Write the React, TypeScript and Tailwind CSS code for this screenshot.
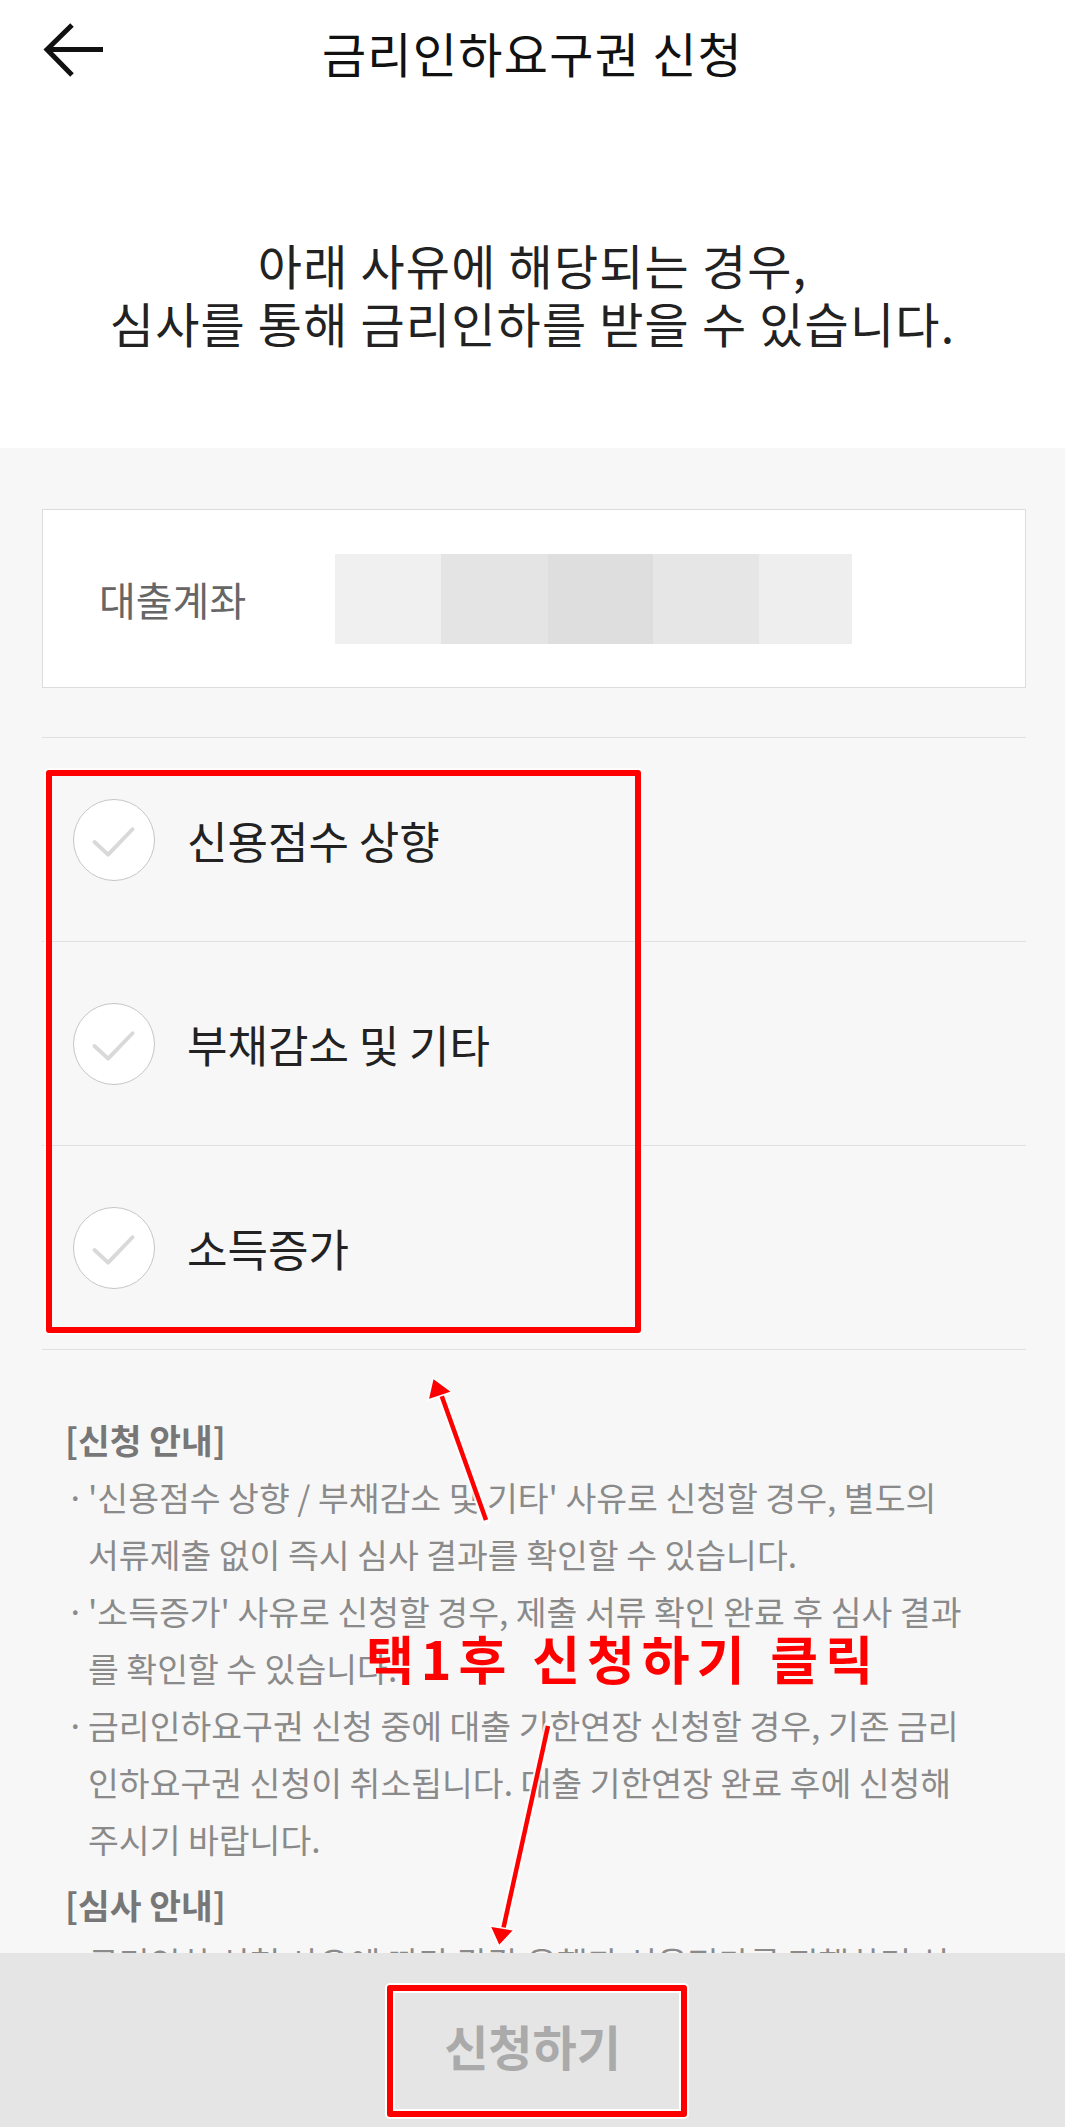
import React from 'react';

const reasons = ['신용점수 상향', '부채감소 및 기타', '소득증가'];

const blurCells = [
    { c: 'bg-[#f0f0f0]', w: 'w-[106px]' },
    { c: 'bg-[#e4e4e4]', w: 'w-[107px]' },
    { c: 'bg-[#dedede]', w: 'w-[105px]' },
    { c: 'bg-[#e6e6e6]', w: 'w-[106px]' },
    { c: 'bg-[#eeeeee]', w: 'w-[93px]' },
];

function BackArrow() {
    return (
        <svg width="64" height="56" viewBox="0 0 64 56" fill="none">
            <path d="M29 3 L4 27.5 L29 53" stroke="#111" strokeWidth="5" />
            <path d="M5 27.5 H60" stroke="#111" strokeWidth="5" />
        </svg>
    );
}

function CheckCircle() {
    return (
        <div className="w-[82px] h-[82px] shrink-0 rounded-full bg-white border-[1.5px] border-[#c6c6c6] flex items-center justify-center">
            <svg width="82" height="82" viewBox="0 0 82 82" fill="none">
                <path d="M21 43 L35 56 L60 30" stroke="#d9d9d9" strokeWidth="4" strokeLinecap="round" strokeLinejoin="round" />
            </svg>
        </div>
    );
}

function Bullet(props: { lines: string[] }) {
    return (
        <div className="flex">
            <span className="w-[23px] pl-[1px] shrink-0">·</span>
            <div>
                {props.lines.map((line) =>
                    <p className="whitespace-nowrap" key={line}>{line}</p>
                )}
            </div>
        </div>
    );
}

function Annotations() {
    return (
        <>
            {/* red box around the reason list */}
            <div className="absolute left-[46px] top-[770px] w-[595px] h-[563px] border-[6px] border-[#ff0000] rounded-[3px] ring-2 ring-white/80"></div>
            {/* red box around the submit button */}
            <div className="absolute left-[387px] top-[1985px] w-[300px] h-[132px] border-[6px] border-[#ff0000] rounded-[3px] ring-2 ring-white shadow-[inset_0_0_0_2px_white]"></div>
            <p className="absolute left-[366px] top-[1628px] text-[52px] leading-[60px] font-bold tracking-[7px] text-[#ff0000] whitespace-nowrap">
                택1후 신청하기 클릭
            </p>
            <svg className="absolute left-0 top-0 pointer-events-none" width="1065" height="2127" viewBox="0 0 1065 2127" fill="none">
                <g stroke="white" strokeWidth="9" strokeLinecap="round" opacity="0.8">
                    <path d="M486 1520 L441 1394" />
                    <path d="M548 1726 L503 1930" />
                </g>
                <path d="M486 1520 L441 1394" stroke="#ff0000" strokeWidth="4.5" />
                <path d="M433 1378 L428 1400 L452 1392 Z" fill="#ff0000" stroke="white" strokeWidth="1.5" />
                <path d="M548 1726 L503 1930" stroke="#ff0000" strokeWidth="4.5" />
                <path d="M499 1946 L490 1926 L514 1930 Z" fill="#ff0000" stroke="white" strokeWidth="1.5" />
            </svg>
        </>
    );
}

export default function App() {
    return (
        <div className="relative w-[1065px] h-[2127px] overflow-hidden flex flex-col bg-[#f7f7f7] font-['Noto_Sans_CJK_KR','Noto_Sans',sans-serif]">
            {/* header + intro */}
            <div className="bg-white h-[448px] shrink-0 flex flex-col">
                <div className="relative h-[104px] flex items-center justify-center">
                    <div className="absolute left-[43px] top-[22px]">
                        <BackArrow />
                    </div>
                    <h1 className="text-[48px] leading-none tracking-[1.3px] text-[#111]">금리인하요구권 신청</h1>
                </div>
                <div className="pt-[131px] text-center text-[48px] leading-[58px] tracking-[1.2px] text-[#222]">
                    <p>아래 사유에 해당되는 경우,</p>
                    <p>심사를 통해 금리인하를 받을 수 있습니다.</p>
                </div>
            </div>

            {/* body */}
            <div className="flex-1 overflow-hidden">
                <div className="ml-[42px] w-[984px] mt-[61px] h-[179px] bg-white border-[1.5px] border-[#dcdcdc] flex items-center pl-[56px]">
                    <span className="text-[40px] text-[#666] w-[236px]">대출계좌</span>
                    <div className="flex h-[90px]">
                        {blurCells.map((b) =>
                            <div className={`${b.c} ${b.w} h-full`} key={b.c}></div>
                        )}
                    </div>
                </div>

                <div className="ml-[42px] w-[984px] mt-[49px] border-b-[1.5px] border-[#e0e0e0]">
                    {reasons.map((r) =>
                        <div className="h-[204px] border-t-[1.5px] border-[#e0e0e0] flex items-center pl-[31px] gap-[32px]" key={r}>
                            <CheckCircle />
                            <span className="text-[44px] text-[#222]">{r}</span>
                        </div>
                    )}
                </div>

                <div className="pl-[65px] pt-[61px] text-[33.5px] leading-[57px] text-[#8a8a8a]">
                    <p className="font-bold text-[#777] text-[34.5px]">[신청 안내]</p>
                    <Bullet lines={["'신용점수 상향 / 부채감소 및 기타' 사유로 신청할 경우, 별도의", '서류제출 없이 즉시 심사 결과를 확인할 수 있습니다.']} />
                    <Bullet lines={["'소득증가' 사유로 신청할 경우, 제출 서류 확인 완료 후 심사 결과", '를 확인할 수 있습니다.']} />
                    <Bullet lines={['금리인하요구권 신청 중에 대출 기한연장 신청할 경우, 기존 금리', '인하요구권 신청이 취소됩니다. 대출 기한연장 완료 후에 신청해', '주시기 바랍니다.']} />
                    <p className="font-bold text-[#777] text-[34.5px] mt-[9px]">[심사 안내]</p>
                    <Bullet lines={['금리인하 신청 사유에 따라 각각 은행과 신용평가를 진행하며 심']} />
                </div>
            </div>

            {/* bottom bar */}
            <div className="h-[174px] shrink-0 bg-[#e5e5e5] flex items-center justify-center pt-[10px]">
                <span className="text-[48px] font-bold text-[#aaaaaa]">신청하기</span>
            </div>

            <Annotations />
        </div>
    );
}
